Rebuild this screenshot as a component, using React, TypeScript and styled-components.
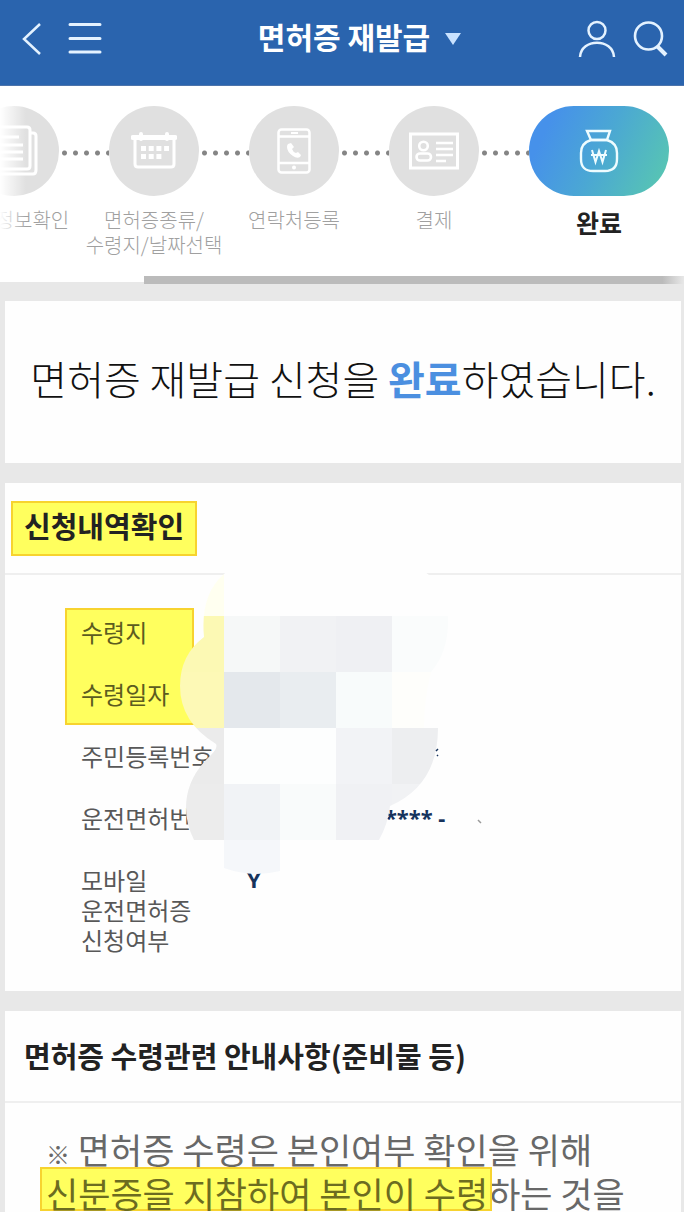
import React from "react";
import styled, { createGlobalStyle, css } from "styled-components";

const GlobalStyle = createGlobalStyle`
  html { scrollbar-width: none; }
  body {
    margin: 0;
    background: #e8e8e8;
    font-family: "Noto Sans CJK KR", "Noto Sans", sans-serif;
    color: #222;
  }
  *, *::before, *::after { box-sizing: border-box; }
`;

const Header = styled.header`
  display: grid;
  grid-template-columns: 1fr auto 1fr;
  align-items: center;
  height: 86px;
  padding: 0 16px 8px 20px;
  background: #2a64ae;
  border-bottom: 1px solid #4d74ab;
`;

const HeaderGroup = styled.div<{ $end?: boolean }>`
  display: flex;
  gap: ${(p) => (p.$end ? 16 : 24)}px;
  justify-content: ${(p) => (p.$end ? "flex-end" : "flex-start")};
`;

const IconButton = styled.button`
  display: flex;
  padding: 0;
  border: 0;
  background: none;
  color: #e4f2ff;
`;

const Title = styled.h1`
  margin: 0;
`;

const TitleButton = styled.button`
  display: flex;
  align-items: center;
  gap: 14px;
  padding: 0 0 6px 32px;
  border: 0;
  background: none;
  color: #fff;
  font: inherit;
  font-size: 30px;
  font-weight: 700;
  line-height: 40px;
  white-space: nowrap;

  svg {
    margin-top: 6px;
  }
`;

const Stepper = styled.nav`
  position: relative;
  overflow: hidden;
  background: #fff;

  &::before {
    content: "";
    position: absolute;
    inset: 0 auto 8px 0;
    width: 26px;
    background: linear-gradient(90deg, #fff, rgba(255, 255, 255, 0));
    z-index: 1;
  }
`;

const Steps = styled.ol`
  display: flex;
  justify-content: flex-end;
  min-height: 190px;
  margin: 0;
  padding: 20px 15px 0 0;
  list-style: none;
`;

const Step = styled.li<{ $active?: boolean }>`
  display: flex;
  flex: none;
  flex-direction: column;
  align-items: center;
  gap: ${(p) => (p.$active ? 14 : 11)}px;
  width: ${(p) => (p.$active ? 140 : 90)}px;
  color: ${(p) => (p.$active ? "#222" : "#a0a0a0")};
  font-size: ${(p) => (p.$active ? 25 : 20)}px;
  font-weight: ${(p) => (p.$active ? 700 : 300)};
  line-height: 25px;
  text-align: center;
  white-space: pre;
`;

const Badge = styled.span<{ $active?: boolean }>`
  display: flex;
  align-items: center;
  justify-content: center;
  width: 100%;
  height: 90px;
  border-radius: 45px;
  background: ${(p) =>
    p.$active ? "linear-gradient(115deg, #4691ea 15%, #4ba8d3 52%, #57c4b4 92%)" : "#e0e0e0"};
`;

const Connector = styled.li`
  flex: none;
  width: 50px;
  height: 6px;
  margin-top: 44px;
  background: radial-gradient(circle, #858585 2px, transparent 3px) 0 0 / 11px 6px repeat-x;
`;

const ScrollTrack = styled.div`
  height: 8px;
  padding-left: 21%;
  background: linear-gradient(#fff 6px, #e8e8e8 6px);
`;

const ScrollThumb = styled.div`
  height: 100%;
  background: linear-gradient(90deg, #bbb 96%, #e8e8e8);
`;

const Main = styled.main`
  display: flex;
  flex-direction: column;
  gap: 20px;
  padding: 17px 3px 0 5px;
`;

const Card = styled.section`
  position: relative;
  background: #fefefe;
`;

const Message = styled.p`
  margin: 0;
  padding: 47px 16px 55px;
  color: #111;
  font-size: 40px;
  font-weight: 300;
  line-height: 60px;
  text-align: center;
  white-space: nowrap;

  strong {
    color: #4b8fe0;
    font-weight: 700;
  }
`;

const CardHeader = styled.div`
  display: flex;
  align-items: center;
  height: 92px;
  padding: 0 6px;
  border-bottom: 2px solid #efefef;
`;

const yellowBox = css`
  border: 2px solid #f7d32f;
  background: #ffff5e;
`;

const CardTitle = styled.h2<{ $marked?: boolean }>`
  margin: 0;
  padding: 0 11px ${(p) => (p.$marked ? 6 : 2)}px;
  border: 2px solid transparent;
  font-size: 29px;
  font-weight: 700;
  line-height: 45px;
  white-space: nowrap;
  ${(p) => p.$marked && yellowBox}
`;

const Details = styled.dl`
  position: relative;
  display: grid;
  grid-template-columns: 166px 1fr;
  row-gap: 32px;
  margin: 0;
  padding: 42px 16px 36px 76px;
  font-size: 24px;
  line-height: 30px;

  &::before {
    content: "";
    position: absolute;
    left: 60px;
    top: 33px;
    width: 129px;
    height: 117px;
    ${yellowBox}
  }
`;

const Label = styled.dt<{ $marked?: boolean }>`
  position: relative;
  color: ${(p) => (p.$marked ? "#5c5c20" : "#585858")};
  font-weight: 400;
  white-space: pre;
`;

const Value = styled.dd<{ $masked?: boolean }>`
  margin: 0;
  padding-left: ${(p) => (p.$masked ? 126 : 0)}px;
  color: #16335c;
  font-family: "Noto Sans", "Noto Sans CJK KR", sans-serif;
  font-size: 22px;
  font-weight: 700;
  line-height: 28px;
`;

const Mosaic = styled.svg`
  position: absolute;
  left: 175px;
  top: 77px;
`;

const Notice = styled.p`
  margin: 0;
  padding: 24px 16px 0 41px;
  color: #686868;
  font-size: 35px;
  line-height: 44px;
  white-space: nowrap;
`;

const ReferenceMark = styled.span`
  font-size: 24px;
  line-height: 24px;
`;

const Marked = styled.mark`
  position: relative;
  z-index: 0;
  background: none;
  color: #6c6c20;

  &::before {
    content: "";
    position: absolute;
    z-index: -1;
    left: -6px;
    right: -4px;
    top: 0;
    height: 44px;
    ${yellowBox}
  }
`;

const DocumentsIcon = () => (
  <svg width="54" height="54" viewBox="0 0 54 54" fill="none" stroke="#fff" strokeWidth="3">
    <path d="M3 3h37q3 0 3 3v36q0 3-3 3H3z" />
    <path d="M43 9h3q3 0 3 3v34q0 4-3 4H12" />
    <path d="M12 13h20M12 21h24M12 28h24M12 35h24" />
  </svg>
);

const CalendarIcon = () => (
  <svg width="46" height="40" viewBox="0 0 46 40" fill="none" stroke="#fff" strokeWidth="3">
    <path d="M2 6.500h42" strokeWidth="5" strokeLinecap="round" />
    <path d="M10 3v5M36 3v5" strokeWidth="4" strokeLinecap="round" />
    <path d="M4 6v27q0 3 3 3h33q3 0 3-3V6" />
    <path d="M10 17.500h28" strokeWidth="5" strokeDasharray="5 2.700" />
    <path d="M10 25.500h21" strokeWidth="5" strokeDasharray="5 2.700" />
  </svg>
);

const PhoneIcon = () => (
  <svg width="34" height="46" viewBox="0 0 34 46" fill="none" stroke="#fff" strokeWidth="2.5">
    <rect x="1.500" y="1.500" width="31" height="43" rx="3" />
    <path d="M2 8.500h30M2 35h30" />
    <path d="M14 5h7" strokeWidth="2" />
    <circle cx="17" cy="39.500" r="2" fill="#fff" stroke="none" />
    <path
      d="M11 16l3-1 3 4-2 2q1 3 4 4l2-1 3 3-1 2q-3 2-7-1-6-4-6-9 0-2 1-3z"
      fill="#fff"
      stroke="none"
    />
  </svg>
);

const IdCardIcon = () => (
  <svg width="50" height="38" viewBox="0 0 50 38" fill="none" stroke="#fff" strokeWidth="2.600">
    <rect x="1.500" y="2" width="47" height="34" strokeWidth="3" />
    <circle cx="14.500" cy="14" r="4.300" />
    <rect x="7.500" y="21.500" width="14.500" height="7" rx="3.500" />
    <path d="M27 11h17M27 17h17M27 23h17M27 29h10" />
  </svg>
);

const MoneyBagIcon = () => (
  <svg width="40" height="44" viewBox="0 0 40 44" fill="none" stroke="#eefcff" strokeWidth="2.400">
    <path d="M8 2h23l-3 9H12z" />
    <path d="M12 11h16q10 3 10 13v6q0 12-12 12H14Q2 42 2 30v-6q0-10 10-13z" />
    <path d="M13 21l3.500 12L20 22l3.500 11L27 21M12 26h16" strokeWidth="2" />
  </svg>
);

const MOSAIC_ROWS = [
  { y: 560, fills: ["#fffff0", "#fefefe", "#fefefe", "#fefefe", "#fefefe"] },
  { y: 616, fills: ["#fcf9b4", "#f6f8f8", "#f1f2f4", "#eff0f3", "#fafcfc"] },
  { y: 672, fills: ["#fdf9b6", "#e4e8ec", "#e9edf0", "#f8fbfb", "#fefefb"] },
  { y: 728, fills: ["#ebebeb", "#fdfefe", "#fdfefe", "#f2f3f6", "#edeef0"] },
  { y: 784, fills: ["#ececec", "#f1f3f6", "#f9fbfb", "#f0f1f4", "#f1f2f4"] },
  { y: 840, fills: ["#fefefe", "#f5f7fa", "#fefefe", "#fefefe", "#fefefe"] },
];

const PrivacyMosaic = () => (
  <Mosaic width="310" height="320" viewBox="180 560 310 320" aria-hidden="true">
    <clipPath id="blob">
      <path d="M204 637Q200 595 224 574Q240 560 270 560H400Q448 574 448 622Q448 652 431 672Q424 700 424 728H438Q438 785 390 806Q388 824 379 840H280V871Q252 878 224 868V840H194Q186 824 186 808Q186 778 211 755Q218 748 216 744Q180 722 180 686Q180 655 204 637Z" />
    </clipPath>
    <g clipPath="url(#blob)" shapeRendering="crispEdges">
      {MOSAIC_ROWS.map((row) =>
        row.fills.map((fill, i) => (
          <rect key={`${row.y}-${i}`} x={168 + i * 56} y={row.y} width="56" height="56" fill={fill} />
        ))
      )}
    </g>
    <path d="M436 751l2-2M437 755l1 1" stroke="#16335c" strokeWidth="1.500" />
    <path d="M478 820l3 3" stroke="#9a9a9a" strokeWidth="1.500" />
  </Mosaic>
);

const STEPS = [
  { label: "신청정보확인", icon: <DocumentsIcon /> },
  { label: "면허증종류/\n수령지/날짜선택", icon: <CalendarIcon /> },
  { label: "연락처등록", icon: <PhoneIcon /> },
  { label: "결제", icon: <IdCardIcon /> },
  { label: "완료", icon: <MoneyBagIcon />, active: true },
];

const DETAILS = [
  { label: "수령지", marked: true },
  { label: "수령일자", marked: true },
  { label: "주민등록번호" },
  { label: "운전면허번호", value: "***** -", masked: true },
  { label: "모바일\n운전면허증\n신청여부", value: "Y" },
];

export default function App() {
  return (
    <>
      <GlobalStyle />
      <Header>
        <HeaderGroup>
          <IconButton aria-label="뒤로">
            <svg width="24" height="36" viewBox="0 0 24 36" fill="none" stroke="currentColor" strokeWidth="2.500">
              <path d="M20 3L4 18l16 15" />
            </svg>
          </IconButton>
          <IconButton aria-label="메뉴">
            <svg width="34" height="36" viewBox="0 0 34 36" fill="none" stroke="currentColor" strokeWidth="3" strokeLinecap="round">
              <path d="M2 3.500h30M2 17.500h30M2 31h30" />
            </svg>
          </IconButton>
        </HeaderGroup>
        <Title>
          <TitleButton>
            면허증 재발급
            <svg width="18" height="14" viewBox="0 0 18 14" aria-hidden="true">
              <path d="M1 1h16L9 13z" fill="#c9e2ff" />
            </svg>
          </TitleButton>
        </Title>
        <HeaderGroup $end>
          <IconButton aria-label="내 정보">
            <svg width="38" height="38" viewBox="0 0 38 38" fill="none" stroke="currentColor" strokeWidth="2.500">
              <circle cx="19" cy="10.500" r="8.500" />
              <path d="M2 37C3 18 35 18 36 37" />
            </svg>
          </IconButton>
          <IconButton aria-label="검색">
            <svg width="36" height="38" viewBox="0 0 36 38" fill="none" stroke="currentColor" strokeWidth="2.600">
              <circle cx="16.500" cy="16" r="13.500" />
              <path d="M25 26l9 9" strokeWidth="4" />
            </svg>
          </IconButton>
        </HeaderGroup>
      </Header>

      <Stepper aria-label="진행 단계">
        <Steps>
          {STEPS.map((step, i) => (
            <React.Fragment key={step.label}>
              {i > 0 && <Connector aria-hidden="true" />}
              <Step $active={step.active} aria-current={step.active ? "step" : undefined}>
                <Badge $active={step.active}>{step.icon}</Badge>
                {step.label}
              </Step>
            </React.Fragment>
          ))}
        </Steps>
        <ScrollTrack>
          <ScrollThumb />
        </ScrollTrack>
      </Stepper>

      <Main>
        <Card>
          <Message>
            면허증 재발급 신청을 <strong>완료</strong>하였습니다.
          </Message>
        </Card>

        <Card>
          <CardHeader>
            <CardTitle $marked>신청내역확인</CardTitle>
          </CardHeader>
          <Details>
            {DETAILS.map((row) => (
              <React.Fragment key={row.label}>
                <Label $marked={row.marked}>{row.label}</Label>
                <Value $masked={row.masked}>{row.value}</Value>
              </React.Fragment>
            ))}
          </Details>
          <PrivacyMosaic />
        </Card>

        <Card>
          <CardHeader>
            <CardTitle>면허증 수령관련 안내사항(준비물 등)</CardTitle>
          </CardHeader>
          <Notice>
            <ReferenceMark>※</ReferenceMark> 면허증 수령은 본인여부 확인을 위해
            <br />
            <Marked>신분증을 지참하여 본인이 수령</Marked>하는 것을
          </Notice>
        </Card>
      </Main>
    </>
  );
}
